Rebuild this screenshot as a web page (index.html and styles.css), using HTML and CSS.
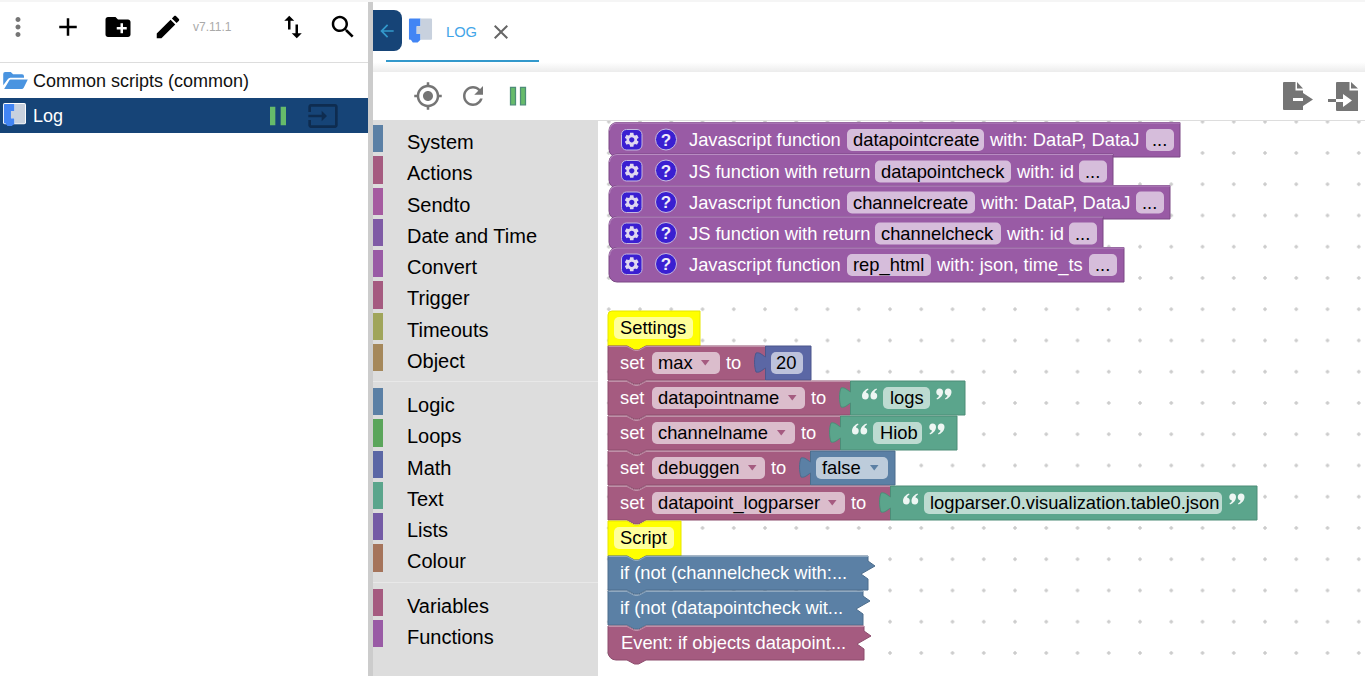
FILE: index.html
```html
<!DOCTYPE html>
<html lang="en">
<head>
  <meta charset="UTF-8">
  <meta name="viewport" content="width=device-width, initial-scale=1.0">
  <title>Scripts - Log</title>
  <link rel="stylesheet" href="styles.css">
</head>
<body>
  <svg class="defs" width="0" height="0">
    <symbol id="blockly" viewBox="0 0 26 28">
      <path fill="#fff" d="M2 0h22a2 2 0 0 1 2 2v20a2 2 0 0 1-2 2H2a2 2 0 0 1-2-2V2a2 2 0 0 1 2-2z"/>
      <path fill="#4285f4" d="M2 1h11v8H9v8h4v6l-3 3H5l-2-3H2a1 1 0 0 1-1-1V2a1 1 0 0 1 1-1z"/>
      <path fill="#c8d1de" d="M13 1h11a1 1 0 0 1 1 1v20a1 1 0 0 1-1 1H13V17H9V9h4z"/>
    </symbol>
    <symbol id="pause" viewBox="0 0 24 24"><path d="M6 19h4V5H6v14zm8-14v14h4V5h-4z"/></symbol>
    <symbol id="gear" viewBox="0 0 24 24"><path d="M19.14 12.94c.04-.3.06-.61.06-.94 0-.32-.02-.64-.07-.94l2.03-1.58c.18-.14.23-.41.12-.61l-1.92-3.32c-.12-.22-.37-.29-.59-.22l-2.39.96c-.5-.38-1.03-.7-1.62-.94l-.36-2.54c-.04-.24-.24-.41-.48-.41h-3.84c-.24 0-.43.17-.47.41l-.36 2.54c-.59.24-1.13.57-1.62.94l-2.39-.96c-.22-.08-.47 0-.59.22L2.74 8.87c-.12.21-.08.47.12.61l2.03 1.58c-.05.3-.09.63-.09.94s.02.64.07.94l-2.03 1.58c-.18.14-.23.41-.12.61l1.92 3.32c.12.22.37.29.59.22l2.39-.96c.5.38 1.03.7 1.62.94l.36 2.54c.05.24.24.41.48.41h3.84c.24 0 .44-.17.47-.41l.36-2.54c.59-.24 1.13-.56 1.62-.94l2.39.96c.22.08.47 0 .59-.22l1.92-3.32c.12-.22.07-.47-.12-.61l-2.01-1.58zM12 15.6c-1.98 0-3.6-1.62-3.6-3.6s1.62-3.6 3.6-3.6 3.6 1.62 3.6 3.6-1.62 3.6-3.6 3.6z"/></symbol>
    <symbol id="qopen" viewBox="0 0 16 12">
      <path d="M3.500 11.500a3.500 3.500 0 0 1-3.500-3.500C0 4.500 3 1.500 6 .5l.5 1C5 2.500 4 3.500 4 4.600a3.500 3.500 0 0 1-.5 6.900z"/>
      <path d="M12 11.500a3.500 3.500 0 0 1-3.500-3.500c0-3.500 3-6.500 6-7.500l.5 1c-1.500 1-2.500 2-2.500 3.100a3.500 3.500 0 0 1-.5 6.900z"/>
    </symbol>
    <symbol id="qclose" viewBox="0 0 16 12">
      <path d="M3.500.5A3.500 3.500 0 0 1 7 4c0 3.500-3 6.500-6 7.500l-.5-1c1.500-1 2.500-2 2.500-3.100A3.500 3.500 0 0 1 3.500.5z"/>
      <path d="M12 .5A3.500 3.500 0 0 1 15.500 4c0 3.500-3 6.500-6 7.500l-.5-1c1.500-1 2.500-2 2.500-3.100A3.500 3.500 0 0 1 12 .5z"/>
    </symbol>
  </svg>

  <div class="app">
    <aside class="sidebar">
      <div class="side-toolbar">
        <button class="icon-btn grey"><svg class="ico" viewBox="0 0 24 24"><path d="M12 8c1.100 0 2-.9 2-2s-.9-2-2-2-2 .9-2 2 .9 2 2 2zm0 2c-1.100 0-2 .9-2 2s.9 2 2 2 2-.9 2-2-.9-2-2-2zm0 6c-1.100 0-2 .9-2 2s.9 2 2 2 2-.9 2-2-.9-2-2-2z"/></svg></button>
        <button class="icon-btn"><svg class="ico" viewBox="0 0 24 24"><path d="M19 13h-6v6h-2v-6H5v-2h6V5h2v6h6v2z"/></svg></button>
        <button class="icon-btn"><svg class="ico" viewBox="0 0 24 24"><path d="M20 6h-8l-2-2H4c-1.110 0-1.990.89-1.990 2L2 18c0 1.110.89 2 2 2h16c1.110 0 2-.89 2-2V8c0-1.110-.89-2-2-2zm-1 8h-3v3h-2v-3h-3v-2h3V9h2v3h3v2z"/></svg></button>
        <button class="icon-btn"><svg class="ico" viewBox="0 0 24 24"><path d="M3 17.250V21h3.750L17.810 9.940l-3.750-3.750L3 17.250zM20.710 7.040c.39-.39.39-1.020 0-1.410l-2.340-2.340c-.39-.39-1.020-.39-1.410 0l-1.830 1.830 3.750 3.750 1.830-1.830z"/></svg></button>
        <span class="version">v7.11.1</span>
        <button class="icon-btn"><svg class="ico" viewBox="0 0 24 24"><path d="M16 17.010V10h-2v7.010h-3L15 21l4-3.990h-3zM9 3L5 6.990h3V14h2V6.990h3L9 3z"/></svg></button>
        <button class="icon-btn"><svg class="ico" viewBox="0 0 24 24"><path d="M15.500 14h-.79l-.28-.27C15.410 12.590 16 11.110 16 9.500 16 5.910 13.090 3 9.500 3S3 5.910 3 9.500 5.910 16 9.500 16c1.610 0 3.090-.59 4.230-1.570l.27.28v.79l5 4.990L20.490 19l-4.990-5zm-6 0C7.010 14 5 11.990 5 9.500S7.010 5 9.500 5 14 7.010 14 9.500 11.990 14 9.500 14z"/></svg></button>
      </div>
      <div class="tree-row">
        <svg class="folder" viewBox="0 0 26 18"><path d="M0 14V2a2 2 0 0 1 2-2h6l2.500 2.500H20a2 2 0 0 1 2 2V6H7.500a3 3 0 0 0-2.700 1.700z"/><path d="M1 18h18.500a2.500 2.500 0 0 0 2.200-1.300L26 8H7.800a1.500 1.500 0 0 0-1.300.8z"/></svg>
        <span class="tree-label">Common scripts (common)</span>
      </div>
      <div class="tree-row selected">
        <svg class="tree-logo"><use href="#blockly"/></svg>
        <span class="tree-label tree-name">Log</span>
        <svg class="tree-pause"><use href="#pause"/></svg>
        <svg class="tree-input" viewBox="0 0 24 24"><path d="M21 3.010H3c-1.100 0-2 .9-2 2V9h2V4.990h18v14.030H3V15H1v4.010c0 1.100.9 1.980 2 1.980h18c1.100 0 2-.88 2-1.980v-14c0-1.100-.9-2-2-2zM11 16l4-4-4-4v3H1v2h10v3z"/></svg>
      </div>
    </aside>

    <main class="editor">
      <div class="tabbar">
        <button class="back-btn"><svg viewBox="0 0 24 24"><path d="M20 11H7.830l5.590-5.590L12 4l-8 8 8 8 1.410-1.410L7.830 13H20v-2z"/></svg></button>
        <div class="tab">
          <svg class="tab-logo"><use href="#blockly"/></svg>
          <span class="tab-label">LOG</span>
          <svg class="tab-close" viewBox="0 0 24 24"><path d="M19 6.410L17.590 5 12 10.590 6.410 5 5 6.410 10.590 12 5 17.590 6.410 19 12 13.410 17.590 19 19 17.590 13.410 12z"/></svg>
        </div>
      </div>

      <div class="edit-toolbar">
        <svg class="tool" viewBox="0 0 24 24"><path d="M12 8c-2.210 0-4 1.790-4 4s1.790 4 4 4 4-1.790 4-4-1.790-4-4-4zm8.940 3c-.46-4.170-3.770-7.480-7.940-7.940V1h-2v2.060C6.830 3.520 3.520 6.830 3.060 11H1v2h2.060c.46 4.170 3.770 7.480 7.940 7.940V23h2v-2.060c4.170-.46 7.480-3.770 7.940-7.940H23v-2h-2.060zM12 19c-3.870 0-7-3.130-7-7s3.130-7 7-7 7 3.130 7 7-3.130 7-7 7z"/></svg>
        <svg class="tool" viewBox="0 0 24 24"><path d="M17.650 6.350C16.200 4.900 14.210 4 12 4c-4.420 0-7.990 3.580-7.990 8s3.570 8 7.990 8c3.730 0 6.840-2.550 7.730-6h-2.080c-.82 2.330-3.040 4-5.650 4-3.310 0-6-2.690-6-6s2.690-6 6-6c1.660 0 3.140.69 4.220 1.780L13 11h7V4l-2.350 2.350z"/></svg>
        <svg class="tool green"><use href="#pause"/></svg>
        <span class="spacer"></span>
        <svg class="file-ico" viewBox="0 0 30 30"><path fill-rule="evenodd" d="M0 2a1 1 0 0 1 1-1h11.500v8.500H20V29H1a1 1 0 0 1-1-1zM10 17v3h10v-3z"/><path d="M14 1l6 6.500h-6zM20 12l10 6.500L20 25z"/></svg>
        <svg class="file-ico" viewBox="0 0 30 30"><path fill-rule="evenodd" d="M8 2a1 1 0 0 1 1-1h12.500v8.500H30V30H9a1 1 0 0 1-1-1v-8h7v5l9-6.500L15 13v5H8z"/><path d="M23 1l7 6.500h-7zM0 18h8v3H0z"/></svg>
      </div>

      <div class="blockly">
        <nav class="toolbox">
          <div class="cat"><i class="bar c-system"></i><span>System</span></div>
          <div class="cat"><i class="bar c-actions"></i><span>Actions</span></div>
          <div class="cat"><i class="bar c-sendto"></i><span>Sendto</span></div>
          <div class="cat"><i class="bar c-date"></i><span>Date and Time</span></div>
          <div class="cat"><i class="bar c-convert"></i><span>Convert</span></div>
          <div class="cat"><i class="bar c-actions"></i><span>Trigger</span></div>
          <div class="cat"><i class="bar c-timeouts"></i><span>Timeouts</span></div>
          <div class="cat"><i class="bar c-object"></i><span>Object</span></div>
          <hr class="sep">
          <div class="cat"><i class="bar c-system"></i><span>Logic</span></div>
          <div class="cat"><i class="bar c-loops"></i><span>Loops</span></div>
          <div class="cat"><i class="bar c-math"></i><span>Math</span></div>
          <div class="cat"><i class="bar c-text"></i><span>Text</span></div>
          <div class="cat"><i class="bar c-lists"></i><span>Lists</span></div>
          <div class="cat"><i class="bar c-colour"></i><span>Colour</span></div>
          <hr class="sep">
          <div class="cat"><i class="bar c-actions"></i><span>Variables</span></div>
          <div class="cat"><i class="bar c-convert"></i><span>Functions</span></div>
        </nav>

        <div class="workspace">
          <svg class="blocks" viewBox="598 121 767 555">
            <!-- function blocks -->
            <path class="b purple" d="M617 122.500H1180V157H617a8 8 0 0 1-8-8V130.500a8 8 0 0 1 8-8z"/>
            <path class="hl-purple" d="M609.500 130.500a7.500 7.500 0 0 1 7.500-7.500H1180"/>
            <rect class="f-purple" x="847" y="129" width="137" height="22" rx="5"/>
            <rect class="f-purple" x="1146" y="129" width="28" height="22" rx="5"/>
            <rect class="mut" x="621.500" y="129.500" width="20.500" height="20.500" rx="5"/><use class="gear" href="#gear" x="623" y="131" width="17.500" height="17.500"/>
            <circle class="mut" cx="666" cy="139.500" r="10.500"/><text class="help" x="666" y="145.500">?</text>
            <text class="t" x="689" y="146">Javascript function</text><text class="k" x="853" y="146">datapointcreate</text><text class="t" x="990" y="146">with: DataP, DataJ</text><text class="k" x="1152" y="146">...</text>

            <path class="b purple" d="M617 154H1113V188H617a8 8 0 0 1-8-8V162a8 8 0 0 1 8-8z"/>
            <path class="hl-purple" d="M609.500 162a7.500 7.500 0 0 1 7.500-7.500H1113"/>
            <rect class="f-purple" x="875" y="160.500" width="136" height="22" rx="5"/>
            <rect class="f-purple" x="1079" y="160.500" width="28" height="22" rx="5"/>
            <rect class="mut" x="621.500" y="160.500" width="20.500" height="20.500" rx="5"/><use class="gear" href="#gear" x="623" y="162" width="17.500" height="17.500"/>
            <circle class="mut" cx="666" cy="170.500" r="10.500"/><text class="help" x="666" y="176.500">?</text>
            <text class="t" x="689" y="177.500">JS function with return</text><text class="k" x="881" y="177.500">datapointcheck</text><text class="t" x="1017" y="177.500">with: id</text><text class="k" x="1085" y="177.500">...</text>

            <path class="b purple" d="M617 185.500H1170V219H617a8 8 0 0 1-8-8V193.500a8 8 0 0 1 8-8z"/>
            <path class="hl-purple" d="M609.500 193.500a7.500 7.500 0 0 1 7.500-7.500H1170"/>
            <rect class="f-purple" x="847" y="191.500" width="128" height="22" rx="5"/>
            <rect class="f-purple" x="1136" y="191.500" width="28" height="22" rx="5"/>
            <rect class="mut" x="621.500" y="192" width="20.500" height="20.500" rx="5"/><use class="gear" href="#gear" x="623" y="193.500" width="17.500" height="17.500"/>
            <circle class="mut" cx="666" cy="202" r="10.500"/><text class="help" x="666" y="208">?</text>
            <text class="t" x="689" y="209">Javascript function</text><text class="k" x="853" y="209">channelcreate</text><text class="t" x="981" y="209">with: DataP, DataJ</text><text class="k" x="1142" y="209">...</text>

            <path class="b purple" d="M617 216.500H1103V250H617a8 8 0 0 1-8-8V224.500a8 8 0 0 1 8-8z"/>
            <path class="hl-purple" d="M609.500 224.500a7.500 7.500 0 0 1 7.500-7.500H1103"/>
            <rect class="f-purple" x="875" y="222.500" width="126" height="22" rx="5"/>
            <rect class="f-purple" x="1069" y="222.500" width="28" height="22" rx="5"/>
            <rect class="mut" x="621.500" y="223" width="20.500" height="20.500" rx="5"/><use class="gear" href="#gear" x="623" y="224.500" width="17.500" height="17.500"/>
            <circle class="mut" cx="666" cy="233" r="10.500"/><text class="help" x="666" y="239">?</text>
            <text class="t" x="689" y="240">JS function with return</text><text class="k" x="881" y="240">channelcheck</text><text class="t" x="1007" y="240">with: id</text><text class="k" x="1075" y="240">...</text>

            <path class="b purple" d="M617 247.500H1124V282H617a8 8 0 0 1-8-8V255.500a8 8 0 0 1 8-8z"/>
            <path class="hl-purple" d="M609.500 255.500a7.500 7.500 0 0 1 7.500-7.500H1124"/>
            <rect class="f-purple" x="847" y="254" width="84" height="22" rx="5"/>
            <rect class="f-purple" x="1089" y="254" width="28" height="22" rx="5"/>
            <rect class="mut" x="621.500" y="254" width="20.500" height="20.500" rx="5"/><use class="gear" href="#gear" x="623" y="255.500" width="17.500" height="17.500"/>
            <circle class="mut" cx="666" cy="264" r="10.500"/><text class="help" x="666" y="270">?</text>
            <text class="t" x="689" y="271">Javascript function</text><text class="k" x="853" y="271">rep_html</text><text class="t" x="937" y="271">with: json, time_ts</text><text class="k" x="1095" y="271">...</text>

            <!-- Settings stack -->
            <path class="b yellow" d="M612 311H700V346H646l-7.500 4h-4l-7.500-4H608V315a4 4 0 0 1 4-4z"/>
            <rect class="f-yellow" x="614" y="317" width="79" height="22" rx="5"/>
            <text class="k" x="620" y="334">Settings</text>

            <path class="b red" d="M608 346h19l7.500 4h4l7.500-4H765.500V380H646l-7.500 4h-4l-7.500-4H608z"/>
            <path class="hl-red" d="M608.500 346.500h18.500l7.500 4h4l7.500-4H765"/>
            <rect class="f-red" x="652" y="352" width="68" height="22" rx="5"/>
            <path class="arrow-red" d="M701 360h8.500l-4.250 5.500z"/>
            <text class="t" x="620" y="369">set</text><text class="k" x="658" y="369">max</text><text class="t" x="726" y="369">to</text>
            <path class="b slate" d="M765.500 346H811V380H765.500V368c-3.500 2-5.500 5-9.500 4c-2-6-2-14 0-19c4-1 6 2 9.500 4z"/>
            <rect class="f-slate" x="771" y="352" width="32" height="22" rx="5"/>
            <text class="k" x="776" y="369">20</text>

            <path class="b red" d="M608 381h19l7.500 4h4l7.500-4H850.500V415H646l-7.500 4h-4l-7.500-4H608z"/>
            <path class="hl-red" d="M608.500 381.500h18.500l7.500 4h4l7.500-4H850"/>
            <rect class="f-red" x="652" y="387" width="153" height="22" rx="5"/>
            <path class="arrow-red" d="M788 395h8.500l-4.250 5.500z"/>
            <text class="t" x="620" y="404">set</text><text class="k" x="658" y="404">datapointname</text><text class="t" x="811" y="404">to</text>
            <path class="b green" d="M850.500 381H965V415H850.500V403c-3.500 2-5.500 5-9.500 4c-2-6-2-14 0-19c4-1 6 2 9.500 4z"/>
            <use class="q" href="#qopen" x="862" y="388" width="16" height="12"/>
            <rect class="f-green" x="883" y="387" width="47" height="22" rx="5"/>
            <use class="q" href="#qclose" x="936" y="388" width="16" height="12"/>
            <text class="k" x="890" y="404">logs</text>

            <path class="b red" d="M608 416h19l7.500 4h4l7.500-4H840.500V450H646l-7.500 4h-4l-7.500-4H608z"/>
            <path class="hl-red" d="M608.500 416.500h18.500l7.500 4h4l7.500-4H840"/>
            <rect class="f-red" x="652" y="422" width="143" height="22" rx="5"/>
            <path class="arrow-red" d="M777 430h8.500l-4.250 5.500z"/>
            <text class="t" x="620" y="439">set</text><text class="k" x="658" y="439">channelname</text><text class="t" x="801" y="439">to</text>
            <path class="b green" d="M840.500 416H957V450H840.500V438c-3.500 2-5.500 5-9.500 4c-2-6-2-14 0-19c4-1 6 2 9.500 4z"/>
            <use class="q" href="#qopen" x="852" y="423" width="16" height="12"/>
            <rect class="f-green" x="873" y="422" width="49" height="22" rx="5"/>
            <use class="q" href="#qclose" x="929" y="423" width="16" height="12"/>
            <text class="k" x="880" y="439">Hiob</text>

            <path class="b red" d="M608 451h19l7.500 4h4l7.500-4H810.500V485H646l-7.500 4h-4l-7.500-4H608z"/>
            <path class="hl-red" d="M608.500 451.500h18.500l7.500 4h4l7.500-4H810"/>
            <rect class="f-red" x="652" y="457" width="113" height="22" rx="5"/>
            <path class="arrow-red" d="M748 465h8.500l-4.250 5.500z"/>
            <text class="t" x="620" y="474">set</text><text class="k" x="658" y="474">debuggen</text><text class="t" x="771" y="474">to</text>
            <path class="b blue" d="M810.500 451H895V485H810.500V473c-3.500 2-5.500 5-9.500 4c-2-6-2-14 0-19c4-1 6 2 9.500 4z"/>
            <rect class="f-blue" x="816" y="457" width="72" height="22" rx="5"/>
            <path class="arrow-blue" d="M870 465h8.500l-4.250 5.500z"/>
            <text class="k" x="822" y="474">false</text>

            <path class="b red" d="M608 486h19l7.500 4h4l7.500-4H890.500V520H646l-7.500 4h-4l-7.500-4H608z"/>
            <path class="hl-red" d="M608.500 486.500h18.500l7.500 4h4l7.500-4H890"/>
            <rect class="f-red" x="652" y="492" width="193" height="22" rx="5"/>
            <path class="arrow-red" d="M828 500h8.500l-4.250 5.500z"/>
            <text class="t" x="620" y="509">set</text><text class="k" x="658" y="509">datapoint_logparser</text><text class="t" x="851" y="509">to</text>
            <path class="b green" d="M890.500 486H1257V520H890.500V508c-3.500 2-5.500 5-9.500 4c-2-6-2-14 0-19c4-1 6 2 9.500 4z"/>
            <use class="q" href="#qopen" x="903" y="493" width="16" height="12"/>
            <rect class="f-green" x="924" y="492" width="298" height="22" rx="5"/>
            <use class="q" href="#qclose" x="1229" y="493" width="16" height="12"/>
            <text class="k" x="930" y="509">logparser.0.visualization.table0.json</text>

            <!-- Script stack -->
            <path class="b yellow" d="M608 521h19l7.500 4h4l7.500-4H681V556H646l-7.500 4h-4l-7.500-4H608z"/>
            <rect class="f-yellow" x="614" y="527" width="60" height="22" rx="5"/>
            <text class="k" x="620" y="544">Script</text>

            <path class="b blue" d="M608 556h19l7.500 4h4l7.500-4H868v5l7 5-14 8 7 5V590H646l-7.500 4h-4l-7.500-4H608z"/>
            <path class="hl-blue" d="M608.500 556.500h18.500l7.500 4h4l7.500-4H868"/>
            <text class="t" x="620" y="579">if (not (channelcheck with:...</text>

            <path class="b blue" d="M608 591h19l7.500 4h4l7.500-4H863v5l7 5-14 8 7 5V625H646l-7.500 4h-4l-7.500-4H608z"/>
            <path class="hl-blue" d="M608.500 591.500h18.500l7.500 4h4l7.500-4H863"/>
            <text class="t" x="620" y="614">if (not (datapointcheck wit...</text>

            <path class="b red" d="M608 626h19l7.500 4h4l7.500-4H864v5l7 5-14 8 7 5V660H646l-7.500 4h-4l-7.500-4H616a8 8 0 0 1-8-8z"/>
            <path class="hl-red" d="M608.500 626.500h18.500l7.500 4h4l7.500-4H864"/>
            <text class="t" x="621" y="649">Event: if objects datapoint...</text>
          </svg>
        </div>
      </div>
    </main>
  </div>
</body>
</html>
```

FILE: styles.css
```css
* {
  box-sizing: border-box;
}

html, body {
  height: 100%;
}

body {
  margin: 0;
  overflow: hidden;
  font-family: "Liberation Sans", Arial, sans-serif;
  background: #fff;
  color: #111;
}

.defs {
  position: absolute;
}

.app {
  display: flex;
  height: 100%;
  padding-top: 2px;
  background: #f5f5f5;
}

/* left panel */
.sidebar {
  width: 373px;
  flex: none;
  background: #fff;
  border-right: 5px solid #ccc;
}

.side-toolbar {
  display: flex;
  align-items: center;
  height: 60px;
  padding: 0 0 10px 0;
}

.icon-btn {
  width: 50px;
  height: 50px;
  flex: none;
  padding: 0;
  border: 0;
  background: none;
  display: flex;
  align-items: center;
  justify-content: center;
  color: #000;
}

.icon-btn:first-child {
  width: 36px;
  margin-right: 7px;
}

.icon-btn.grey {
  color: #757575;
}

.ico {
  width: 30px;
  height: 30px;
  fill: currentColor;
}

.version {
  width: 100px;
  font-size: 12px;
  color: #aaa;
}

.tree-row {
  display: flex;
  align-items: center;
  height: 35px;
  padding-left: 3px;
  font-size: 18px;
}

.tree-label {
  padding-top: 2px;
}

.side-toolbar + .tree-row {
  border-top: 1px solid #ddd;
  height: 36px;
}

.folder {
  width: 25px;
  height: 17px;
  margin-right: 5px;
  fill: #4a94e0;
}

.tree-row.selected {
  background: #164477;
  color: #fff;
}

.tree-logo {
  width: 23px;
  height: 25px;
  margin-right: 7px;
}

.tree-name {
  width: 225px;
}

.tree-pause {
  width: 32px;
  height: 32px;
  margin-left: 4px;
  fill: #66bb6a;
}

.tree-input {
  width: 32px;
  height: 32px;
  margin-left: 13px;
  fill: #0e2c50;
}

/* tabs and editor toolbar */
.editor {
  flex: 1;
  min-width: 0;
  display: flex;
  flex-direction: column;
}

.tabbar {
  height: 70px;
  flex: none;
  padding-top: 8px;
  display: flex;
  align-items: flex-start;
  background: linear-gradient(#fff 86%, #ececec);
}

.back-btn {
  width: 29px;
  height: 41px;
  padding: 0 0 0 4px;
  border: 0;
  border-radius: 0 8px 8px 0;
  background: #164477;
}

.back-btn svg {
  display: block;
  width: 20px;
  height: 20px;
  fill: #3399cc;
}

.tab {
  width: 153px;
  height: 52px;
  margin-left: -16px;
  padding: 0 0 8px 22px;
  display: flex;
  align-items: center;
  border-bottom: 2px solid #3399cc;
  position: relative;
  z-index: 1;
}

.tab-logo {
  width: 25px;
  height: 28px;
  margin-right: 13px;
}

.tab-label {
  padding-top: 2px;
  font-size: 14.7px;
  color: #42a5e8;
}

.tab-close {
  width: 24px;
  height: 24px;
  margin: 2px 0 0 12px;
  fill: #666;
}

.edit-toolbar {
  height: 48px;
  flex: none;
  display: flex;
  align-items: center;
  padding: 0 7px 0 40px;
  gap: 15px;
  background: #fff;
}

.tool {
  width: 30px;
  height: 30px;
  fill: #757575;
}

.tool.green {
  fill: #66bb6a;
}

.spacer {
  flex: 1;
}

.file-ico {
  width: 30px;
  height: 30px;
  fill: #757575;
}

/* blockly area */
.blockly {
  flex: 1;
  min-height: 0;
  display: flex;
}

.toolbox {
  width: 225px;
  flex: none;
  padding-top: 5px;
  background: #ddd;
  font-size: 20px;
  color: #000;
}

.cat {
  display: flex;
  height: 27.25px;
  margin-bottom: 4px;
}

.cat span {
  padding-top: 6px;
}

.bar {
  width: 10px;
  height: 100%;
  margin-right: 24px;
}

.sep {
  height: 1px;
  margin: 10px 0 6px;
  border: 0;
  background: #e8e8e8;
}

.c-system { background: #5b80a5; }
.c-actions { background: #a55b80; }
.c-sendto { background: #a55ba0; }
.c-date { background: #7f5ba5; }
.c-convert { background: #995ba5; }
.c-timeouts { background: #a0a55b; }
.c-object { background: #a5885b; }
.c-loops { background: #5ba55b; }
.c-math { background: #5b67a5; }
.c-text { background: #5ba58c; }
.c-lists { background: #745ba5; }
.c-colour { background: #a5745b; }

.workspace {
  flex: 1;
  min-width: 0;
  border-top: 1px solid #ddd;
  background-color: #fff;
  background-image: radial-gradient(circle at center, #ccc 1.4px, transparent 2px);
  background-size: 31.25px 31.25px;
  background-position: -4.87px -14.92px;
}

.blocks {
  display: block;
  width: 767px;
  height: 555px;
}

.blocks text {
  font-size: 18.33px;
  font-family: "Liberation Sans", Arial, sans-serif;
}

.b { stroke-width: 1; }
.purple { fill: #995ba5; stroke: #7a4984; }
.red { fill: #a55b80; stroke: #8c4d6d; }
.green { fill: #5ba58c; stroke: #4d8c77; }
.blue { fill: #5b80a5; stroke: #4d6d8c; }
.slate { fill: #5b67a5; stroke: #4d578c; }
.yellow { fill: #ffff00; stroke: #e6e600; }

.hl-purple, .hl-red, .hl-blue {
  fill: none;
  stroke-width: 1;
}

.hl-purple { stroke: #b88cc2; }
.hl-red { stroke: #c08fa8; }
.hl-blue { stroke: #8fa8c0; }

.f-purple { fill: #d6bddb; }
.f-red { fill: #dbbdcc; }
.f-green { fill: #bddbd1; }
.f-blue { fill: #bdccdb; }
.f-slate { fill: #bdc2db; }
.f-yellow { fill: #ffff99; }

.t { fill: #fff; }
.k { fill: #000; }

.arrow-red { fill: #a55b80; }
.arrow-blue { fill: #5b80a5; }

.mut {
  fill: #3a1fd1;
  stroke: #c5b8e0;
  stroke-width: 1;
}

.gear {
  fill: #e0d8f0;
}

.blocks .help {
  fill: #f0ecfa;
  font-size: 17px;
  font-weight: bold;
  text-anchor: middle;
}

.q {
  fill: #fff;
  opacity: 0.9;
}
```
